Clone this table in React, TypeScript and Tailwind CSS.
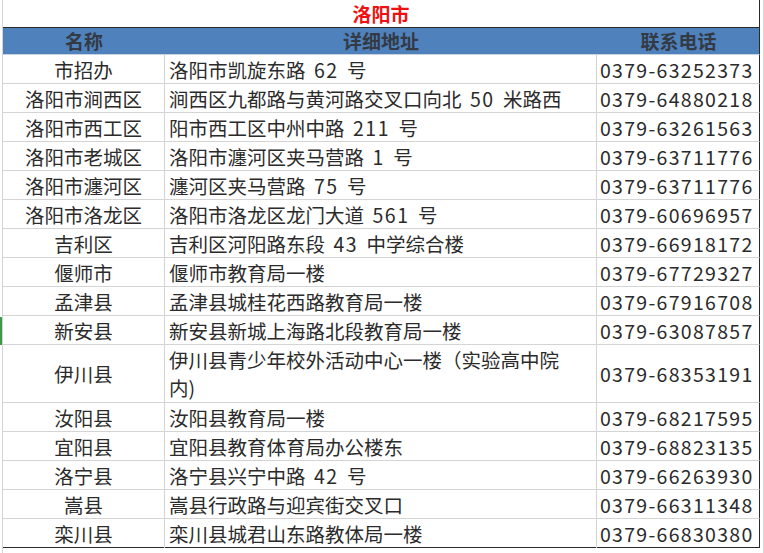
import React from "react";

type Row = { name: string; addr: string[]; phone: string; tall?: boolean };

const rows: Row[] = [
  { name: "市招办", addr: ["洛阳市凯旋东路 62 号"], phone: "0379-63252373" },
  { name: "洛阳市涧西区", addr: ["涧西区九都路与黄河路交叉口向北 50 米路西"], phone: "0379-64880218" },
  { name: "洛阳市西工区", addr: ["阳市西工区中州中路 211 号"], phone: "0379-63261563" },
  { name: "洛阳市老城区", addr: ["洛阳市瀍河区夹马营路 1 号"], phone: "0379-63711776" },
  { name: "洛阳市瀍河区", addr: ["瀍河区夹马营路 75 号"], phone: "0379-63711776" },
  { name: "洛阳市洛龙区", addr: ["洛阳市洛龙区龙门大道 561 号"], phone: "0379-60696957" },
  { name: "吉利区", addr: ["吉利区河阳路东段 43 中学综合楼"], phone: "0379-66918172" },
  { name: "偃师市", addr: ["偃师市教育局一楼"], phone: "0379-67729327" },
  { name: "孟津县", addr: ["孟津县城桂花西路教育局一楼"], phone: "0379-67916708" },
  { name: "新安县", addr: ["新安县新城上海路北段教育局一楼"], phone: "0379-63087857" },
  {
    name: "伊川县",
    addr: ["伊川县青少年校外活动中心一楼（实验高中院", "内)"],
    phone: "0379-68353191",
    tall: true,
  },
  { name: "汝阳县", addr: ["汝阳县教育局一楼"], phone: "0379-68217595" },
  { name: "宜阳县", addr: ["宜阳县教育体育局办公楼东"], phone: "0379-68823135" },
  { name: "洛宁县", addr: ["洛宁县兴宁中路 42 号"], phone: "0379-66263930" },
  { name: "嵩县", addr: ["嵩县行政路与迎宾街交叉口"], phone: "0379-66311348" },
  { name: "栾川县", addr: ["栾川县城君山东路教体局一楼"], phone: "0379-66830380" },
];

// digits in the sheet are set wider than the CJK font's own
function AddrLine({ text }: { text: string }) {
  const parts = text.split(/(\d+)/);
  return (
    <div>
      {parts.map((p, i) =>
        /^\d+$/.test(p) ? (
          <span key={i} className="tracking-[1.6px]">
            {p}
          </span>
        ) : (
          <span key={i}>{p}</span>
        )
      )}
    </div>
  );
}

export default function App() {
  return (
    <div
      className="relative w-[764px] h-[553px] bg-white overflow-hidden text-[#2b2b2b]"
      style={{ fontFamily: '"Noto Sans CJK SC", "Noto Sans", sans-serif' }}
    >
      {/* sheet gridlines outside the table */}
      <div className="absolute left-[2px] top-0 h-full w-px bg-[#d4d4d4]" />
      <div className="absolute left-[763px] top-0 h-full w-px bg-[#d4d4d4]" />
      <div className="absolute left-0 top-[317px] h-[28px] w-[2px] bg-[#3c9a4c]" />

      <div className="ml-[3px] w-[757px]">
        {/* title */}
        <div className="h-[28px] border-b border-r border-[#2a2a2a] flex items-center justify-center">
          <span className="text-[19px] font-bold text-[#ee1111] leading-[26px]">洛阳市</span>
        </div>

        {/* header */}
        <div className="grid grid-cols-[162px_432px_163px] h-[27px] bg-[#4f81bd] border-r border-[#2a2a2a] border-b border-b-[#c9d3e0] text-[19px] font-bold text-[#333a44]">
          <div className="flex items-center justify-center leading-[26px]">名称</div>
          <div className="flex items-center justify-center leading-[26px]">详细地址</div>
          <div className="flex items-center justify-center leading-[26px]">联系电话</div>
        </div>

        {/* data */}
        {rows.map((r, i) => (
          <div
            key={i}
            className={
              "grid grid-cols-[162px_432px_163px] border-r border-r-[#2a2a2a] text-[19.5px] " +
              (r.tall ? "h-[58px] " : "h-[29px] ") +
              (i === rows.length - 1 ? "border-b border-b-[#2a2a2a]" : "border-b border-b-[#d4d4d4]")
            }
          >
            <div className="border-r border-[#d4d4d4] flex items-center justify-center pt-[1px] leading-none whitespace-nowrap">
              {r.name}
            </div>
            <div className="border-r border-[#d4d4d4] flex flex-col justify-center pl-[4px] pt-[1px] leading-[28px] whitespace-nowrap [word-spacing:4px]">
              {r.addr.map((line, j) => (
                <AddrLine key={j} text={line} />
              ))}
            </div>
            <div className="flex items-center pl-[3px] pt-[1px] leading-none whitespace-nowrap tracking-[1.3px]">
              {r.phone}
            </div>
          </div>
        ))}
      </div>
    </div>
  );
}
